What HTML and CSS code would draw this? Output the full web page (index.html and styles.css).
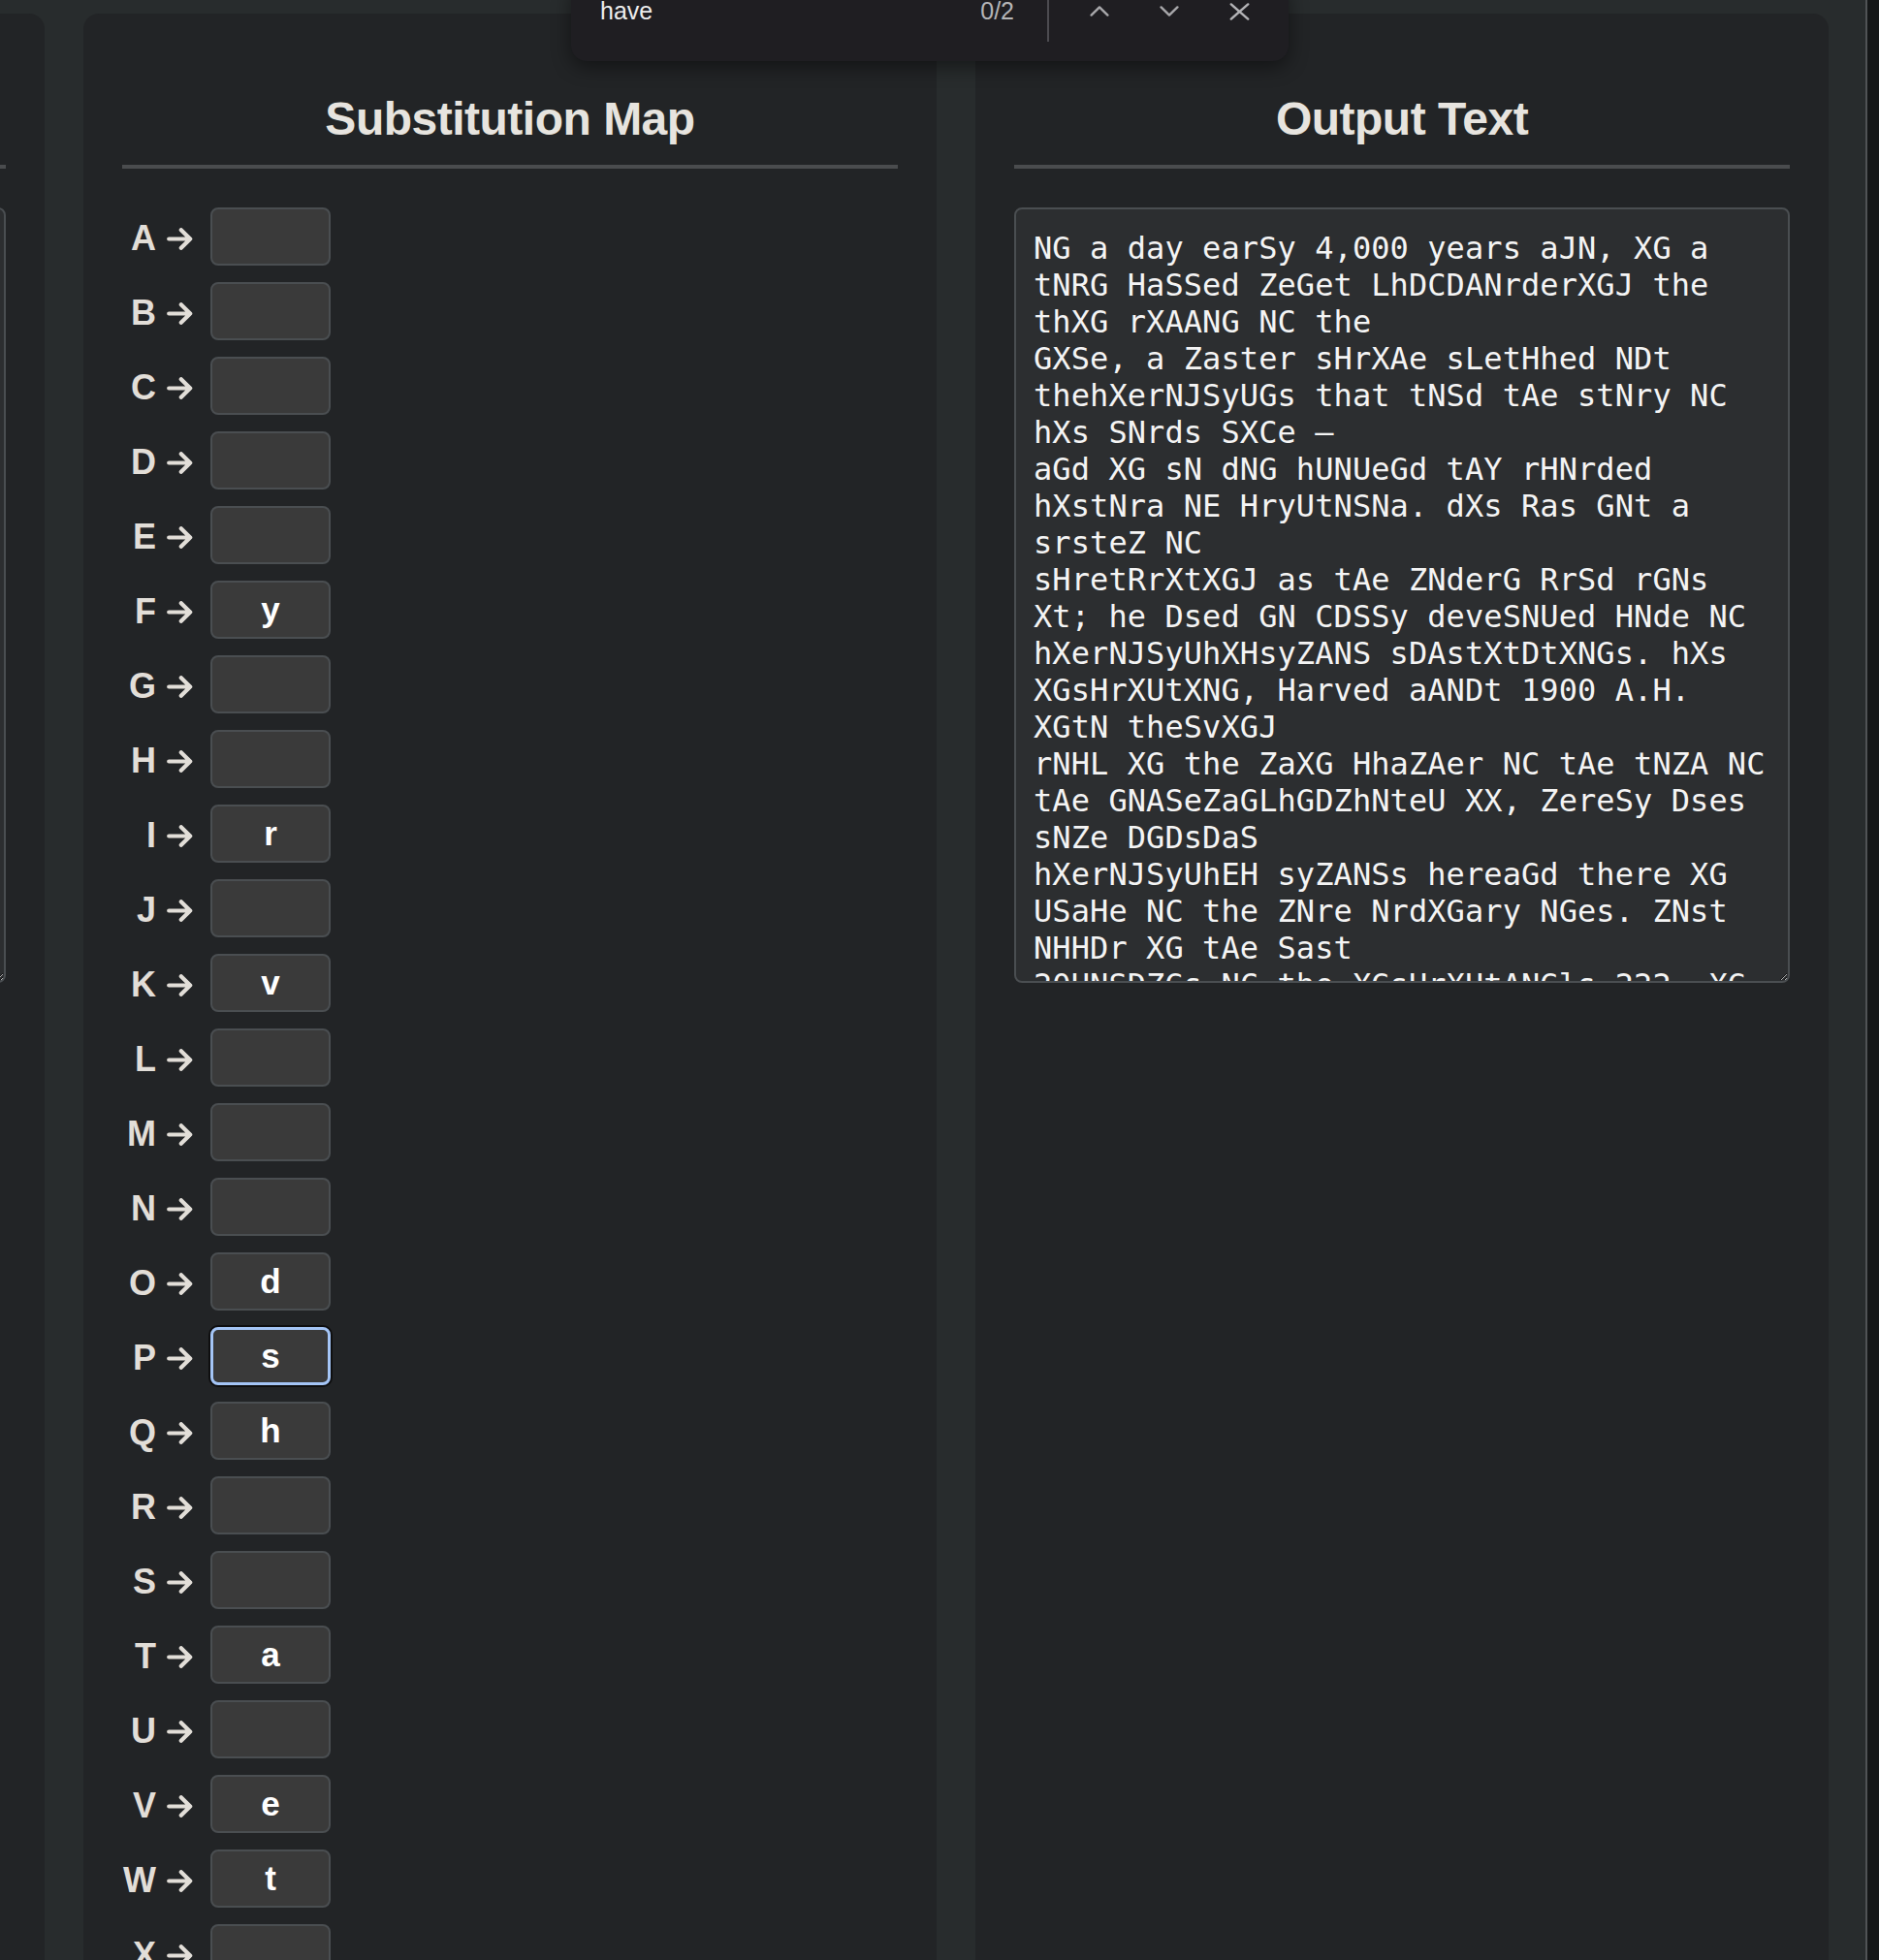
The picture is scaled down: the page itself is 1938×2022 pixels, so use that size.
FILE: index.html
```html
<!DOCTYPE html>
<html lang="en">
<head>
<meta charset="utf-8">
<title>Substitution Cipher</title>
<link rel="stylesheet" href="styles.css">
</head>
<body>
<svg class="defs" width="0" height="0" aria-hidden="true">
  <symbol id="arr" viewBox="0 0 27 23">
    <path d="M2.2 11.5 H24.2 M14.8 2.2 L24.2 11.5 L14.8 20.8" fill="none" stroke="currentColor" stroke-width="4.2" stroke-linecap="round" stroke-linejoin="round"/>
  </symbol>
</svg>
<div class="viewport">
  <div class="columns">
    <section class="panel">
      <h2 class="panel-title">Input Text</h2>
      <textarea class="text-box" spellcheck="false">Wk l ohf elysg 4,000 fuayq lzw, bk a
qwsk alqqui cuhge wbhoxomkbtwky qxu
axbk yblapk wo qxu
kbsu, a cnqwuy gobmbu qjgacaiy wxq
qaujbuowqeom qasq qwqi qnu qwlwo ws
abq qlbiq qbsu —</textarea>
    </section>
    <section class="panel">
      <h2 class="panel-title">Substitution Map</h2>
      <div class="map-list">
        <div class="map-row"><div class="map-label"><span>A</span><svg class="arrow"><use href="#arr"/></svg></div><input class="map-input" type="text" maxlength="1" value=""></div>
        <div class="map-row"><div class="map-label"><span>B</span><svg class="arrow"><use href="#arr"/></svg></div><input class="map-input" type="text" maxlength="1" value=""></div>
        <div class="map-row"><div class="map-label"><span>C</span><svg class="arrow"><use href="#arr"/></svg></div><input class="map-input" type="text" maxlength="1" value=""></div>
        <div class="map-row"><div class="map-label"><span>D</span><svg class="arrow"><use href="#arr"/></svg></div><input class="map-input" type="text" maxlength="1" value=""></div>
        <div class="map-row"><div class="map-label"><span>E</span><svg class="arrow"><use href="#arr"/></svg></div><input class="map-input" type="text" maxlength="1" value=""></div>
        <div class="map-row"><div class="map-label"><span>F</span><svg class="arrow"><use href="#arr"/></svg></div><input class="map-input" type="text" maxlength="1" value="y"></div>
        <div class="map-row"><div class="map-label"><span>G</span><svg class="arrow"><use href="#arr"/></svg></div><input class="map-input" type="text" maxlength="1" value=""></div>
        <div class="map-row"><div class="map-label"><span>H</span><svg class="arrow"><use href="#arr"/></svg></div><input class="map-input" type="text" maxlength="1" value=""></div>
        <div class="map-row"><div class="map-label"><span>I</span><svg class="arrow"><use href="#arr"/></svg></div><input class="map-input" type="text" maxlength="1" value="r"></div>
        <div class="map-row"><div class="map-label"><span>J</span><svg class="arrow"><use href="#arr"/></svg></div><input class="map-input" type="text" maxlength="1" value=""></div>
        <div class="map-row"><div class="map-label"><span>K</span><svg class="arrow"><use href="#arr"/></svg></div><input class="map-input" type="text" maxlength="1" value="v"></div>
        <div class="map-row"><div class="map-label"><span>L</span><svg class="arrow"><use href="#arr"/></svg></div><input class="map-input" type="text" maxlength="1" value=""></div>
        <div class="map-row"><div class="map-label"><span>M</span><svg class="arrow"><use href="#arr"/></svg></div><input class="map-input" type="text" maxlength="1" value=""></div>
        <div class="map-row"><div class="map-label"><span>N</span><svg class="arrow"><use href="#arr"/></svg></div><input class="map-input" type="text" maxlength="1" value=""></div>
        <div class="map-row"><div class="map-label"><span>O</span><svg class="arrow"><use href="#arr"/></svg></div><input class="map-input" type="text" maxlength="1" value="d"></div>
        <div class="map-row"><div class="map-label"><span>P</span><svg class="arrow"><use href="#arr"/></svg></div><input class="map-input is-focused" type="text" maxlength="1" value="s"></div>
        <div class="map-row"><div class="map-label"><span>Q</span><svg class="arrow"><use href="#arr"/></svg></div><input class="map-input" type="text" maxlength="1" value="h"></div>
        <div class="map-row"><div class="map-label"><span>R</span><svg class="arrow"><use href="#arr"/></svg></div><input class="map-input" type="text" maxlength="1" value=""></div>
        <div class="map-row"><div class="map-label"><span>S</span><svg class="arrow"><use href="#arr"/></svg></div><input class="map-input" type="text" maxlength="1" value=""></div>
        <div class="map-row"><div class="map-label"><span>T</span><svg class="arrow"><use href="#arr"/></svg></div><input class="map-input" type="text" maxlength="1" value="a"></div>
        <div class="map-row"><div class="map-label"><span>U</span><svg class="arrow"><use href="#arr"/></svg></div><input class="map-input" type="text" maxlength="1" value=""></div>
        <div class="map-row"><div class="map-label"><span>V</span><svg class="arrow"><use href="#arr"/></svg></div><input class="map-input" type="text" maxlength="1" value="e"></div>
        <div class="map-row"><div class="map-label"><span>W</span><svg class="arrow"><use href="#arr"/></svg></div><input class="map-input" type="text" maxlength="1" value="t"></div>
        <div class="map-row"><div class="map-label"><span>X</span><svg class="arrow"><use href="#arr"/></svg></div><input class="map-input" type="text" maxlength="1" value=""></div>
        <div class="map-row"><div class="map-label"><span>Y</span><svg class="arrow"><use href="#arr"/></svg></div><input class="map-input" type="text" maxlength="1" value=""></div>
        <div class="map-row"><div class="map-label"><span>Z</span><svg class="arrow"><use href="#arr"/></svg></div><input class="map-input" type="text" maxlength="1" value=""></div>
      </div>
    </section>
    <section class="panel">
      <h2 class="panel-title">Output Text</h2>
      <textarea class="text-box" spellcheck="false">NG a day earSy 4,000 years aJN, XG a
tNRG HaSSed ZeGet LhDCDANrderXGJ the
thXG rXAANG NC the
GXSe, a Zaster sHrXAe sLetHhed NDt
thehXerNJSyUGs that tNSd tAe stNry NC
hXs SNrds SXCe —
aGd XG sN dNG hUNUeGd tAY rHNrded
hXstNra NE HryUtNSNa. dXs Ras GNt a
srsteZ NC
sHretRrXtXGJ as tAe ZNderG RrSd rGNs
Xt; he Dsed GN CDSSy deveSNUed HNde NC
hXerNJSyUhXHsyZANS sDAstXtDtXNGs. hXs
XGsHrXUtXNG, Harved aANDt 1900 A.H.
XGtN theSvXGJ
rNHL XG the ZaXG HhaZAer NC tAe tNZA NC
tAe GNASeZaGLhGDZhNteU XX, ZereSy Dses
sNZe DGDsDaS
hXerNJSyUhEH syZANSs hereaGd there XG
USaHe NC the ZNre NrdXGary NGes. ZNst
NHHDr XG tAe Sast
20HNSDZGs NC the XGsHrXUtANGls 222. XG
tAe GNASeZaG's tNZA.</textarea>
    </section>
  </div>

  <div class="findbar">
    <span class="find-query">have</span>
    <span class="find-count">0/2</span>
    <span class="find-sep"></span>
    <span class="find-btn"><svg width="20" height="11" viewBox="0 0 20 11"><path d="M1.6 9.6 L10 1.4 L18.4 9.6" fill="none" stroke="currentColor" stroke-width="2.4" stroke-linecap="round" stroke-linejoin="round"/></svg></span>
    <span class="find-btn"><svg width="20" height="11" viewBox="0 0 20 11"><path d="M1.6 1.4 L10 9.6 L18.4 1.4" fill="none" stroke="currentColor" stroke-width="2.4" stroke-linecap="round" stroke-linejoin="round"/></svg></span>
    <span class="find-btn find-close"><svg width="21" height="18" viewBox="0 0 21 18"><path d="M1.8 1.4 L19.2 16.6 M19.2 1.4 L1.8 16.6" fill="none" stroke="currentColor" stroke-width="2.4" stroke-linecap="round"/></svg></span>
  </div>
</div>
<div class="vscroll"></div>
</body>
</html>
```

FILE: styles.css
```css
html {
  color-scheme: dark;
}

html,
body {
  margin: 0;
  height: 100%;
  overflow: hidden;
}

body {
  display: flex;
  background: #282c2d;
  font-family: "Liberation Sans", Arial, sans-serif;
}

.defs {
  position: absolute;
  width: 0;
  height: 0;
}

.viewport {
  flex: 1;
  min-width: 0;
  overflow: hidden;
  position: relative;
}

.vscroll {
  flex: 0 0 14px;
  box-sizing: border-box;
  border-left: 2px solid #505355;
  background: #151718;
}

.columns {
  display: flex;
  gap: 40px;
  padding-top: 14px;
  margin-left: -834px;
}

.panel {
  flex: 0 0 880px;
  box-sizing: border-box;
  background: #222426;
  border-radius: 16px;
  padding: 80px 40px 40px;
}

.panel-title {
  margin: 0 0 40px;
  padding-bottom: 18px;
  border-bottom: 4px solid #4a4c4e;
  text-align: center;
  font-size: 48px;
  line-height: 58px;
  font-weight: 700;
  letter-spacing: -0.5px;
  color: #e7e4df;
}

.map-list {
  display: flex;
  flex-direction: column;
  gap: 17px;
}

.map-row {
  display: flex;
  align-items: center;
  gap: 18px;
}

.map-label {
  width: 73px;
  display: flex;
  justify-content: flex-end;
  align-items: center;
  gap: 11px;
  padding-top: 4px;
  color: #e2ded8;
  font-size: 36px;
  font-weight: 700;
  line-height: 1;
}

.arrow {
  width: 27px;
  height: 23px;
  flex-shrink: 0;
  color: #e2ded8;
}

.map-input {
  width: 124px;
  height: 60px;
  box-sizing: border-box;
  border: 2px solid #4a4e51;
  border-radius: 8px;
  background: #3a3a3a;
  color: #ffffff;
  font-family: "Liberation Sans", Arial, sans-serif;
  font-size: 35px;
  font-weight: 700;
  text-align: center;
  padding: 0;
  margin: 0;
  outline: none;
}

.map-input.is-focused {
  border: 3px solid #a4c5f6;
  box-shadow: 0 0 0 2px #0e0e0f;
}

.text-box {
  display: block;
  width: 100%;
  height: 800px;
  box-sizing: border-box;
  margin: 0;
  border: 2px solid #4a4e51;
  border-radius: 8px;
  background: #2c2e30;
  color: #f4f4f4;
  font-family: "DejaVu Sans Mono", "Liberation Mono", monospace;
  font-size: 32px;
  line-height: 38px;
  letter-spacing: 0.08px;
  padding: 21px 14px 21px 18px;
  overflow: hidden;
  outline: none;
}

.findbar {
  position: absolute;
  top: -20px;
  left: 589px;
  width: 740px;
  height: 83px;
  box-sizing: border-box;
  display: flex;
  align-items: stretch;
  padding: 0 15px 20px 30px;
  background: #1f1e22;
  border-radius: 16px;
  box-shadow: 0 6px 20px rgba(0, 0, 0, 0.45);
}

.find-query {
  flex: 1;
  align-self: center;
  font-size: 25px;
  color: #ededed;
}

.find-count {
  align-self: center;
  margin-right: 34px;
  font-size: 25px;
  color: #b5b5b8;
}

.find-sep {
  width: 2px;
  margin-right: 16px;
  background: #4c4b50;
}

.find-btn {
  width: 72px;
  display: flex;
  align-items: center;
  justify-content: center;
  color: #a8a8ab;
}

.find-close {
  color: #b3b3b6;
}
```
